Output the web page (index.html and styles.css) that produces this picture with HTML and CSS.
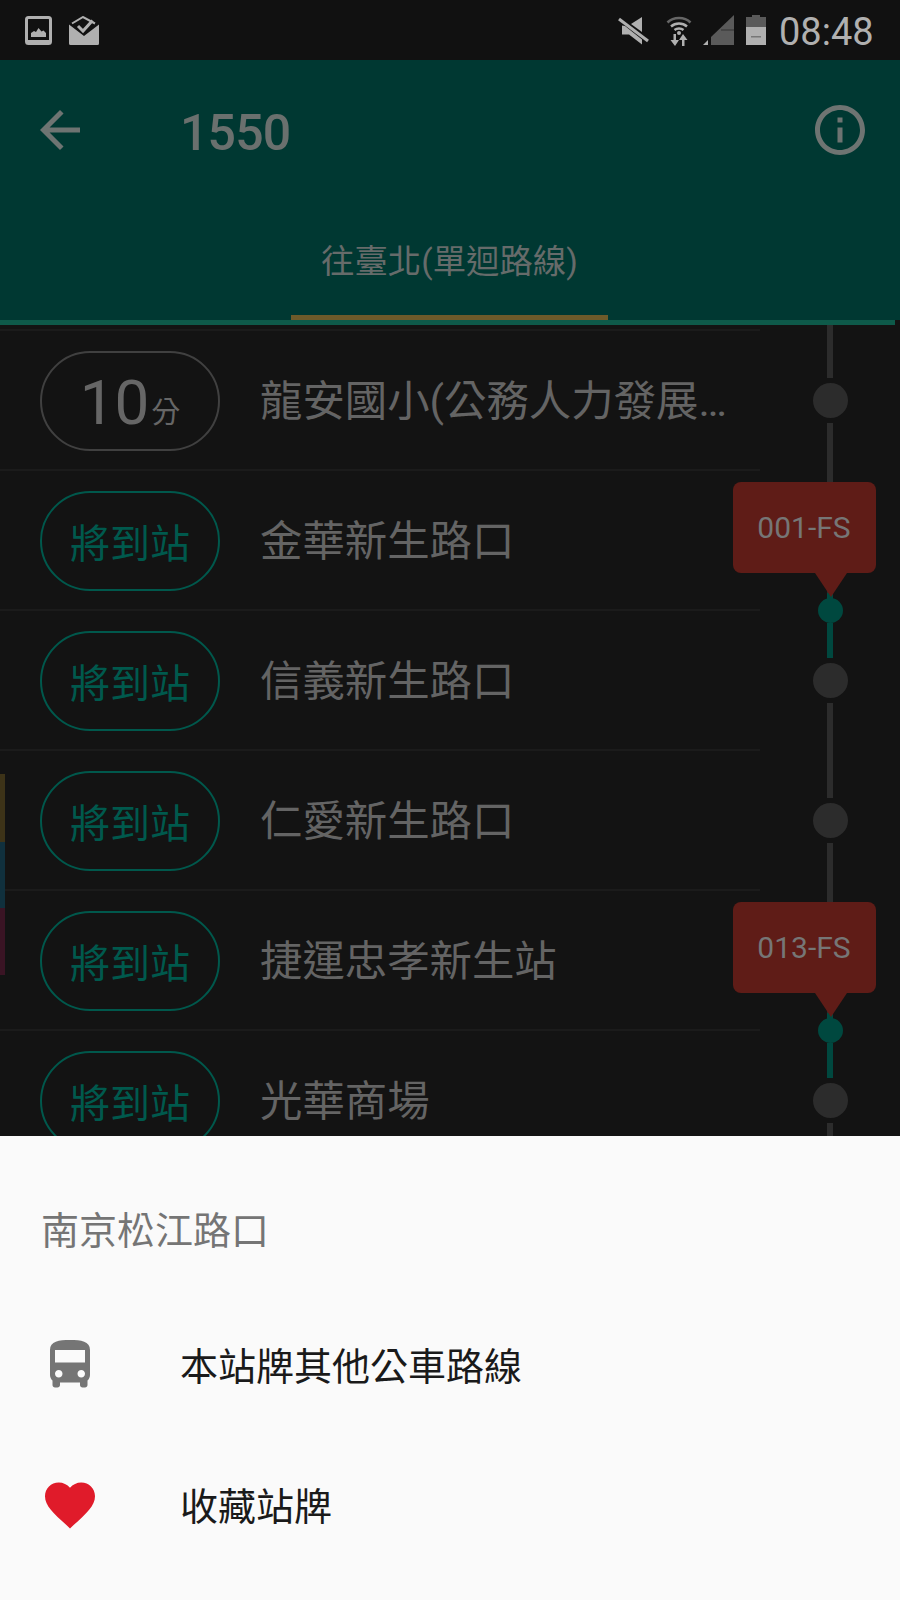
FILE: index.html
```html
<!DOCTYPE html>
<html lang="zh-Hant">
<head>
<meta charset="utf-8">
<title>1550</title>
<link rel="stylesheet" href="styles.css">
</head>
<body>
<div class="phone">
  <header class="status">
    <svg class="st-pic" viewBox="0 0 27 29"><rect x="1.500" y="1.500" width="24" height="26" rx="2" fill="none" stroke="#b0b0b0" stroke-width="3"/><rect x="1" y="24" width="25" height="4" fill="#b0b0b0"/><path d="M6 21v-4l3-2 2 1 2.500-4 3 3.500 2-1 2.500 2.500v4z" fill="#b0b0b0"/></svg>
    <svg class="st-mail" viewBox="0 0 30 29"><path d="M0 8.500L15 20 30 8.500v19a1.500 1.500 0 0 1-1.500 1.500h-27A1.500 1.500 0 0 1 0 27.500z" fill="#b0b0b0"/><path d="M3 7.500L14 1l12 6.500" fill="none" stroke="#b0b0b0" stroke-width="2"/><path d="M9 10l5 5 9.500-10.500" fill="none" stroke="#b0b0b0" stroke-width="3"/></svg>
    <span class="status-gap"></span>
    <svg class="st-mute" viewBox="0 0 31 28"><path d="M24 0v15L13 7z" fill="#b0b0b0"/><path d="M1 2l29 22" stroke="#b0b0b0" stroke-width="3"/><path d="M4 8.500v9h7l13 10v-5L7 9z" fill="#b0b0b0"/></svg>
    <svg class="st-wifi" viewBox="0 0 26 31"><path d="M1.500 7.500C7.500 1.500 18.500 1.500 24.500 7.500" fill="none" stroke="#666" stroke-width="2.600"/><path d="M5 11.500c4.500-4 11.500-4 16 0M8.500 15c2.500-2 6.500-2 9 0" fill="none" stroke="#b0b0b0" stroke-width="2.400"/><circle cx="13" cy="18" r="2" fill="#b0b0b0"/><path d="M7.500 19v6H4.500l4.500 6 4-6h-3v-6zM18.500 31v-6h3l-4.500-6-4 6h3v6z" fill="#b0b0b0"/></svg>
    <svg class="st-signal" viewBox="0 0 31 30"><path d="M8 30V22L31 0v30z" fill="#5a5a5a"/><path d="M0 30l5-5v5z" fill="#b0b0b0"/><path d="M18 15h13" stroke="#333" stroke-width="1"/></svg>
    <svg class="st-batt" viewBox="0 0 20 30"><path d="M6 0h8v2h6v28H0V2h6z" fill="#5a5a5a"/><rect y="12" width="20" height="18" fill="#b0b0b0"/><rect x="5" y="21" width="10" height="1.500" fill="#777"/></svg>
    <span class="clock">08:48</span>
  </header>

  <section class="bar">
    <div class="bar-top">
      <svg class="bar-icon" viewBox="0 0 24 24"><path d="M20 11H7.830l5.590-5.590L12 4l-8 8 8 8 1.410-1.410L7.830 13H20v-2z"/></svg>
      <h1 class="route">1550</h1>
      <svg class="bar-icon" viewBox="0 0 24 24"><path d="M11 7h2v2h-2zm0 4h2v6h-2zm1-9C6.480 2 2 6.480 2 12s4.480 10 10 10 10-4.480 10-10S17.520 2 12 2zm0 18c-4.410 0-8-3.590-8-8s3.590-8 8-8 8 3.590 8 8-3.590 8-8 8z"/></svg>
    </div>
    <div class="tab"><span class="tab-label">往臺北(單迴路線)</span></div>
  </section>
  <div class="accent"></div>

  <main class="content">
    <div class="fab-strip"><i class="strip-a"></i><i class="strip-b"></i><i class="strip-c"></i></div>
    <ul class="stops">
      <li class="stop"><span class="pill"><b class="mins">10</b><small class="unit">分</small></span><span class="name">龍安國小(公務人力發展…</span></li>
      <li class="stop"><span class="pill soon">將到站</span><span class="name">金華新生路口</span></li>
      <li class="stop"><span class="pill soon">將到站</span><span class="name">信義新生路口</span></li>
      <li class="stop"><span class="pill soon">將到站</span><span class="name">仁愛新生路口</span></li>
      <li class="stop"><span class="pill soon">將到站</span><span class="name">捷運忠孝新生站</span></li>
      <li class="stop"><span class="pill soon">將到站</span><span class="name">光華商場</span></li>
    </ul>
    <div class="rail">
      <i class="line l-53"></i><i class="dot"></i>
      <i class="line l-175"></i><i class="dot live"><span class="bubble">001-FS</span></i>
      <i class="line green"></i><i class="dot"></i>
      <i class="line l-95"></i><i class="dot"></i>
      <i class="line l-175"></i><i class="dot live"><span class="bubble">013-FS</span></i>
      <i class="line green"></i><i class="dot"></i>
      <i class="line l-20"></i>
    </div>
  </main>

  <footer class="sheet">
    <div class="sheet-title">南京松江路口</div>
    <div class="action">
      <svg class="action-icon" viewBox="0 0 24 24"><path fill="#757575" d="M4 16c0 .880.390 1.670 1 2.220V20c0 .550.450 1 1 1h1c.550 0 1-.450 1-1v-1h8v1c0 .550.450 1 1 1h1c.550 0 1-.450 1-1v-1.780c.610-.550 1-1.340 1-2.220V6c0-3.500-3.580-4-8-4s-8 .500-8 4v10zm3.500 1c-.830 0-1.500-.670-1.500-1.500S6.670 14 7.500 14s1.500.670 1.500 1.500S8.330 17 7.500 17zm9 0c-.830 0-1.500-.670-1.500-1.500s.670-1.500 1.500-1.500 1.500.670 1.500 1.500-.670 1.500-1.500 1.500zm1.500-6H6V6h12v5z"/></svg>
      <span class="action-label">本站牌其他公車路線</span>
    </div>
    <div class="action">
      <svg class="action-icon" viewBox="0 0 24 24"><path fill="#e01b2a" d="M12 21.350l-1.450-1.320C5.400 15.360 2 12.280 2 8.500 2 5.420 4.420 3 7.500 3c1.740 0 3.410.810 4.500 2.090C13.090 3.810 14.760 3 16.500 3 19.580 3 22 5.420 22 8.500c0 3.780-3.400 6.860-8.550 11.540L12 21.350z"/></svg>
      <span class="action-label">收藏站牌</span>
    </div>
  </footer>
</div>
</body>
</html>
```

FILE: styles.css
```css
* { box-sizing: border-box; }
html, body { margin: 0; padding: 0; background: #131313; }
body { font-family: Roboto, "Noto Sans CJK TC", sans-serif; }
.phone { width: 900px; height: 1600px; display: flex; flex-direction: column; overflow: hidden; background: #131313; }

/* status bar */
.status { height: 60px; flex: none; background: #111; display: flex; align-items: center; padding-left: 25px; padding-right: 28px; }
.status svg { flex: none; display: block; }
.st-pic { width: 27px; height: 29px; margin-right: 17px; }
.st-mail { width: 30px; height: 29px; }
.status-gap { flex: 1; }
.st-mute { width: 31px; height: 28px; margin-right: 17px; margin-top: 1px; }
.st-wifi { width: 26px; height: 31px; margin-right: 11px; }
.st-signal { width: 31px; height: 30px; margin-right: 12px; }
.st-batt { width: 20px; height: 30px; margin-right: 13px; }
.clock { color: #b0b0b0; font-size: 38px; line-height: 64px; height: 60px; width: 93px; }

/* toolbar */
.bar { height: 260px; flex: none; background: #003832; display: flex; flex-direction: column; }
.bar-top { height: 140px; padding: 0 30px 0 30px; display: flex; align-items: center; flex: none; }
.bar-icon { width: 60px; height: 60px; fill: #6e7472; flex: none; }
.route { flex: 1; margin: 5px 0 0 90px; font-size: 50px; letter-spacing: -0.800px; font-weight: 500; color: #6a706e; line-height: 60px; }
.tab { width: 317px; margin-left: 291px; flex: 1; border-bottom: 5px solid #6d5a2a; display: flex; justify-content: center; padding-top: 37px; }
.tab-label { font-size: 33.400px; line-height: 50px; color: #666b6a; white-space: nowrap; }
.accent { height: 5px; width: 895px; flex: none; background: #0e5a4a; }

/* stops */
.content { flex: 1; min-height: 0; display: flex; position: relative; overflow: hidden; }
.stops { list-style: none; margin: 0; padding: 4px 0 0; width: 760px; flex: none; }
.stop { height: 140px; border-top: 2px solid #1b1b1b; padding-top: 20px; display: flex; align-items: flex-start; }
.pill { width: 180px; height: 100px; margin-left: 40px; flex: none; border: 2.500px solid #404040; border-radius: 50px; display: flex; align-items: center; justify-content: center; color: #666; }
.pill.soon { border-color: #00584c; color: #00594d; font-size: 40px; }
.mins { font-weight: 400; font-size: 62px; line-height: 1; margin-top: 4px; }
.unit { font-size: 29px; margin-left: 2px; margin-top: 18px; }
.name { margin-left: 40px; height: 100px; line-height: 102px; font-size: 42.400px; color: #646464; white-space: nowrap; }

/* route rail */
.rail { width: 140px; flex: none; display: flex; flex-direction: column; align-items: center; }
.line { display: block; width: 6px; flex: none; background: #2c2c2c; }
.l-20 { height: 20px; margin-top: 5px; }
.l-53 { height: 53px; }
.l-95 { height: 95px; margin-top: 5px; margin-bottom: 5px; }
.l-175 { height: 175px; margin-top: 5px; }
.line.green { height: 35px; background: #00483f; margin-bottom: 5px; }
.dot { display: block; flex: none; width: 35px; height: 35px; border-radius: 50%; background: #2c2c2c; }
.l-53 + .dot { margin-top: 5px; }
.dot.live { position: relative; width: 25px; height: 25px; background: #00483f; }
.dot.live::before { content: ""; position: absolute; left: 9.500px; top: -5px; width: 6px; height: 6px; background: #00483f; }
.bubble { position: absolute; left: -85px; bottom: 50px; width: 143px; height: 91px; background: #5f1c17; border-radius: 8px; color: #767676; font-size: 30px; font-style: normal; display: flex; align-items: center; justify-content: center; }
.bubble::after { content: ""; position: absolute; left: 82px; top: 100%; border-left: 16px solid transparent; border-right: 16px solid transparent; border-top: 24px solid #5f1c17; }

/* colour strip at the screen edge */
.fab-strip { position: absolute; left: 0; top: 449px; width: 5px; display: flex; flex-direction: column; }
.fab-strip i { display: block; }
.strip-a { height: 68px; background: #3d3318; }
.strip-b { height: 66px; background: #10303d; }
.strip-c { height: 67px; background: #3a1424; }

/* bottom sheet */
.sheet { height: 464px; flex: none; background: #fafafa; padding-top: 71px; }
.sheet-title { margin-left: 41px; height: 48px; line-height: 48px; font-size: 38px; color: #757575; margin-bottom: 40px; }
.action { height: 140px; display: flex; align-items: center; padding-left: 40px; }
.action-icon { width: 60px; height: 60px; flex: none; }
.action-label { margin-left: 80px; font-size: 38px; color: #1a1a1a; margin-bottom: 4px; }
```
